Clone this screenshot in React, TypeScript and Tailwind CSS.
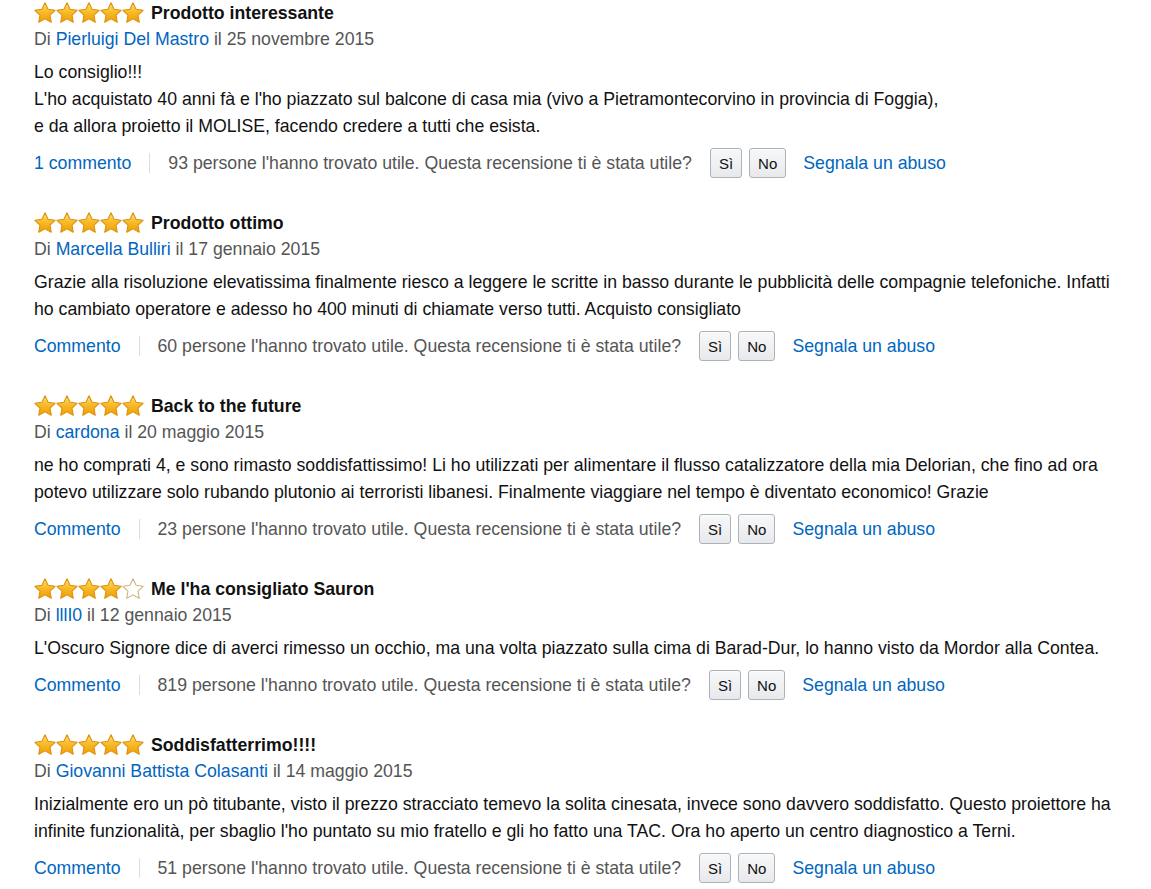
import { useId } from 'react';

type Review = {
  rating: number;
  title: string;
  author: string;
  date: string;
  body: string[];
  comments: string;
  helpful: number;
};

const reviews: Review[] = [
  {
    rating: 5,
    title: 'Prodotto interessante',
    author: 'Pierluigi Del Mastro',
    date: '25 novembre 2015',
    body: [
      'Lo consiglio!!!',
      "L'ho acquistato 40 anni fà e l'ho piazzato sul balcone di casa mia (vivo a Pietramontecorvino in provincia di Foggia),",
      'e da allora proietto il MOLISE, facendo credere a tutti che esista.',
    ],
    comments: '1 commento',
    helpful: 93,
  },
  {
    rating: 5,
    title: 'Prodotto ottimo',
    author: 'Marcella Bulliri',
    date: '17 gennaio 2015',
    body: [
      'Grazie alla risoluzione elevatissima finalmente riesco a leggere le scritte in basso durante le pubblicità delle compagnie telefoniche. Infatti ho cambiato operatore e adesso ho 400 minuti di chiamate verso tutti. Acquisto consigliato',
    ],
    comments: 'Commento',
    helpful: 60,
  },
  {
    rating: 5,
    title: 'Back to the future',
    author: 'cardona',
    date: '20 maggio 2015',
    body: [
      'ne ho comprati 4, e sono rimasto soddisfattissimo! Li ho utilizzati per alimentare il flusso catalizzatore della mia Delorian, che fino ad ora potevo utilizzare solo rubando plutonio ai terroristi libanesi. Finalmente viaggiare nel tempo è diventato economico! Grazie',
    ],
    comments: 'Commento',
    helpful: 23,
  },
  {
    rating: 4,
    title: "Me l'ha consigliato Sauron",
    author: 'lllI0',
    date: '12 gennaio 2015',
    body: [
      "L'Oscuro Signore dice di averci rimesso un occhio, ma una volta piazzato sulla cima di Barad-Dur, lo hanno visto da Mordor alla Contea.",
    ],
    comments: 'Commento',
    helpful: 819,
  },
  {
    rating: 5,
    title: 'Soddisfatterrimo!!!!',
    author: 'Giovanni Battista Colasanti',
    date: '14 maggio 2015',
    body: [
      "Inizialmente ero un pò titubante, visto il prezzo stracciato temevo la solita cinesata, invece sono davvero soddisfatto. Questo proiettore ha infinite funzionalità, per sbaglio l'ho puntato su mio fratello e gli ho fatto una TAC. Ora ho aperto un centro diagnostico a Terni.",
    ],
    comments: 'Commento',
    helpful: 51,
  },
];

const STAR =
  'M12 1.2l3.2 6.7 7.3 1-5.3 5.1 1.3 7.3L12 17.8l-6.5 3.5 1.3-7.3L1.5 8.9l7.3-1z';

const Star = ({ filled }: { filled: boolean }) => {
  const id = useId();
  return (
    <svg width="22" height="21" viewBox="0.6 0.4 22.8 21.6" className="block">
      <defs>
        <linearGradient id={id} x1="0" y1="0" x2="0" y2="1">
          <stop offset="0" stopColor="#fee07a" />
          <stop offset="0.45" stopColor="#f8bc2c" />
          <stop offset="1" stopColor="#f19c00" />
        </linearGradient>
      </defs>
      <path
        d={STAR}
        fill={filled ? `url(#${id})` : '#ffffff'}
        stroke={filled ? '#dc900c' : '#d2b27a'}
        strokeWidth="1.1"
        strokeLinejoin="round"
      />
    </svg>
  );
};

const VoteButton = ({ label }: { label: string }) => (
  <button className="h-[30px] rounded-[3px] border border-[#adb1b8] bg-gradient-to-b from-[#f7f8fa] to-[#e7e9ec] px-[8px] text-[15px] leading-none text-[#111] shadow-[0_1px_0_rgba(255,255,255,0.6)_inset]">
    {label}
  </button>
);

const ReviewItem = ({ review }: { review: Review }) => (
  <div className="mb-[32px]">
    <div className="-mt-px flex h-[27px] items-center">
      <div className="flex">
        {[0, 1, 2, 3, 4].map((i) => (
          <Star key={i} filled={i < review.rating} />
        ))}
      </div>
      <span className="ml-[7px] font-bold text-[#111]">{review.title}</span>
    </div>
    <div className="h-[26px] text-[#555]">
      Di <a className="text-[#0066c0]">{review.author}</a> il {review.date}
    </div>
    <div className="mt-[7px] leading-[27px] text-[#111]">
      {review.body.map((line, i) => (
        <div key={i}>{line}</div>
      ))}
    </div>
    <div className="mt-[8px] flex h-[30px] items-center">
      <a className="text-[#0066c0]">{review.comments}</a>
      <span className="mx-[18px] h-[20px] w-px bg-[#ddd]" />
      <span className="text-[#555]">
        {review.helpful} persone l'hanno trovato utile. Questa recensione ti è
        stata utile?
      </span>
      <div className="ml-[18px] flex gap-[7px]">
        <VoteButton label="Sì" />
        <VoteButton label="No" />
      </div>
      <a className="ml-[17px] text-[#0066c0]">Segnala un abuso</a>
    </div>
  </div>
);

export default function App() {
  return (
    <div className="min-h-screen bg-white pl-[34px] pr-[20px] font-['Liberation_Sans',Arial,sans-serif] text-[17.7px] leading-[26px]">
      {reviews.map((r, i) => (
        <ReviewItem key={i} review={r} />
      ))}
    </div>
  );
}
